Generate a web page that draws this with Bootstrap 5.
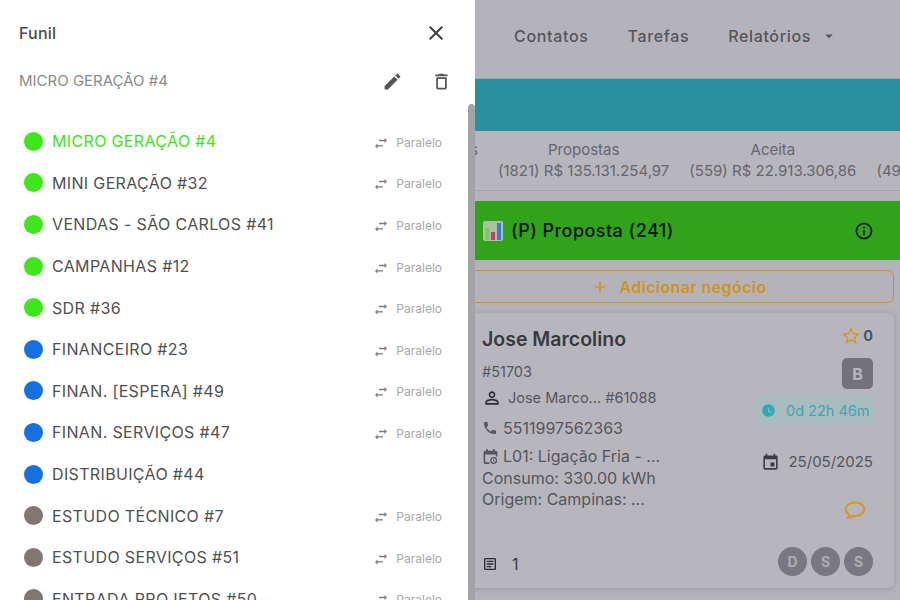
<!DOCTYPE html>
<html lang="pt-BR">
<head>
<meta charset="utf-8">
<title>Funil</title>
<link href="https://cdn.jsdelivr.net/npm/bootstrap@5.3.0/dist/css/bootstrap.min.css" rel="stylesheet">
<style>
html,body{height:600px;overflow:hidden}
body{background:#b4b3b9;font-family:Inter,"Liberation Sans",sans-serif;color:#4c4c52}
svg{fill:currentColor;display:block;flex:none}
.topbar{height:79px;border-bottom:1px solid #a6a5ab;padding:0 62px 7px 0;gap:39px;font-size:16px;font-weight:500;color:#55555b;letter-spacing:.65px}
.tealband{height:52px;background:#29909e}
.statrow{height:60px;border-bottom:1px solid #a6a5ab;background:#b7b6bc;margin-bottom:10px;padding:8px 0 0 259px;gap:20px;font-size:15px;color:#66656d;line-height:21px;white-space:nowrap}
.statcell{flex:none;text-align:center}
.statcell-a{width:219px;text-align:right}
.colwrap{margin-left:440px;margin-right:6px}
.stagehead{height:59px;background:#30a31a;margin-right:-6px;padding:0 26px 0 43px;color:#07130a;font-size:18px;font-weight:500;letter-spacing:.45px}
.addbtn{height:33px;margin:10px 0 10px 0;border:1px solid #d19318;border-radius:6px;color:#d19318;font-weight:600;font-size:16px;line-height:1;background:transparent;padding:0 0 0 24px;letter-spacing:.4px}
.dealcard{height:275px;background:#b7b6bc;border-radius:6px;box-shadow:0 1px 5px rgba(70,70,80,.25);padding:12px 21px 12px 42px;color:#55555c;font-size:14.5px}
.dealname{font-size:19.5px;font-weight:600;color:#39393f;line-height:28px}
.dealnum{margin-top:9px;line-height:20px;color:#55555c}
.personrow{margin-top:6px;line-height:20px}
.phonerow{margin-top:10px;font-size:16px;line-height:20px}
.notesblock{margin-top:8px;font-size:16px;line-height:21.6px}
.amber{color:#d19a2e}
.starcount{font-weight:700;color:#4b5563;font-size:14.5px;line-height:18px}
.starrow{gap:1px;margin-left:-3px}
.letterbox{width:31px;height:31px;border-radius:5px;background:#737278;color:#b7b6bc;font-weight:700;font-size:16px;margin-top:11px}
.timerbox{height:29px;width:118px;margin-top:7px;background:#a9bcbf;color:#41a5b0;font-size:14.5px;padding-left:6px;gap:10px;border-radius:2px}
.daterow{margin-top:26px;font-size:15px;gap:8px;color:#55555c}
.chatbox{margin-top:26px;margin-right:6px}
.avatarbubble{width:29px;height:29px;border-radius:50%;background:#79787e;color:#aeadb3;font-weight:700;font-size:14px}
.footrow{margin-top:auto}
.footcount{gap:14px;font-size:16px;color:#3c3c43;margin-top:6px}
.funildrawer{position:fixed;top:0;left:0;bottom:0;width:475px;background:#fff;color:#4d4d4d;overflow:hidden}
.drawerbody{width:468px;flex:none;padding:0 0 0 19px}
.drawertitle{height:66px;padding-right:20px;font-size:16px;font-weight:500;color:#4a4a4a;letter-spacing:.2px}
.drawersub{height:30px;padding-right:16px;font-size:15px;color:#8a8a8a;margin-bottom:24.5px}
.thumbbar{width:7px;margin-top:104px;background:#a4a4a7;border-radius:4px 4px 0 0}
.funilrow{height:41.6px;font-size:16px;letter-spacing:.35px;color:#505050;padding:0 26px 0 5px}
.funilrow.active .funilname{color:#3fe31b}
.statusdot{width:19px;height:19px;border-radius:50%;margin-right:9px;flex:none}
.dot-green{background:#3ee61b}.dot-blue{background:#1570e0}.dot-grey{background:#827675}
.modetag{font-size:12px;letter-spacing:0;color:#a8a8a8;gap:8px;margin-top:3px}
.modetag svg{color:#7d7d7d}
.iconbtn{color:#555}
.closeicon{color:#3f3f3f}
</style>
</head>
<body>
<nav class="topbar d-flex align-items-center justify-content-end">
  <span>Contatos</span><span>Tarefas</span>
  <span class="d-flex align-items-center" style="gap:9px">Relatórios <svg width="18" height="18" viewBox="0 0 24 24"><path d="M7 10l5 5 5-5z"/></svg></span>
</nav>
<div class="tealband"></div>
<div class="statrow d-flex">
  <div class="statcell statcell-a">s</div>
  <div class="statcell">Propostas<br>(1821) R$ 135.131.254,97</div>
  <div class="statcell">Aceita<br>(559) R$ 22.913.306,86</div>
  <div class="statcell">&nbsp;<br>(49</div>
</div>
<div class="colwrap">
  <div class="stagehead d-flex align-items-center justify-content-between">
    <span class="d-flex align-items-center" style="gap:8px">
      <svg width="20" height="20" viewBox="0 0 20 20"><rect width="20" height="20" rx="2" fill="#a9c2a0"/><rect x="2.500" y="7" width="4" height="12" fill="#7fc46a"/><rect x="8" y="11" width="4" height="8" fill="#d82f78"/><rect x="14" y="2" width="4" height="17" fill="#2f7fd0"/></svg>
      (P) Proposta (241)
    </span>
    <svg width="20" height="20" viewBox="0 0 24 24"><path d="M11 7h2v2h-2zm0 4h2v6h-2zm1-9C6.48 2 2 6.48 2 12s4.48 10 10 10 10-4.48 10-10S17.52 2 12 2zm0 18c-4.41 0-8-3.59-8-8s3.59-8 8-8 8 3.59 8 8-3.59 8-8 8z"/></svg>
  </div>
  <button type="button" class="addbtn btn w-100 d-flex align-items-center justify-content-center">
    <svg width="18" height="18" viewBox="0 0 24 24" style="margin-right:10px"><path d="M19 13h-6v6h-2v-6H5v-2h6V5h2v6h6v2z"/></svg>Adicionar negócio
  </button>
  <div class="dealcard d-flex flex-column">
    <div class="d-flex justify-content-between flex-grow-1">
      <div>
        <div class="dealname">Jose Marcolino</div>
        <div class="dealnum">#51703</div>
        <div class="personrow d-flex align-items-center" style="gap:6px">
          <svg width="20" height="20" viewBox="0 0 24 24" style="color:#2c2c33"><path d="M12 5.900c1.160 0 2.100.94 2.100 2.100s-.94 2.100-2.100 2.100S9.900 9.160 9.900 8s.94-2.100 2.100-2.100m0 9c2.970 0 6.100 1.460 6.100 2.100v1.100H5.900V17c0-.64 3.130-2.100 6.100-2.100M12 4C9.790 4 8 5.790 8 8s1.790 4 4 4 4-1.790 4-4-1.790-4-4-4zm0 9c-2.670 0-8 1.340-8 4v3h16v-3c0-2.660-5.330-4-8-4z"/></svg>
          Jose Marco... #61088
        </div>
        <div class="phonerow d-flex align-items-center" style="gap:5px">
          <svg width="16" height="16" viewBox="0 0 24 24"><path d="M6.620 10.790c1.440 2.830 3.760 5.140 6.590 6.590l2.200-2.200c.27-.27.67-.36 1.020-.24 1.120.37 2.330.57 3.570.57.55 0 1 .45 1 1V20c0 .55-.45 1-1 1-9.390 0-17-7.610-17-17 0-.55.45-1 1-1h3.500c.55 0 1 .45 1 1 0 1.250.2 2.450.57 3.570.11.35.03.74-.25 1.020l-2.200 2.200z"/></svg>
          5511997562363
        </div>
        <div class="notesblock">
          <div class="d-flex align-items-center" style="gap:4px">
            <svg width="17" height="17" viewBox="0 0 16 16"><path d="M4 1h1.500v1.500h5V1H12v1.500h1a1.500 1.500 0 0 1 1.500 1.500v4H13V6H3v7.500h4V15H3a1.500 1.500 0 0 1-1.500-1.500V4A1.500 1.500 0 0 1 3 2.500h1z"/><path d="M11 8.500a3.250 3.250 0 1 0 0 6.500 3.250 3.250 0 0 0 0-6.500zm0 1.200a2.050 2.050 0 1 1 0 4.100 2.050 2.050 0 0 1 0-4.100zM10.500 10.500h.8v1.300l1 .6-.4.6-1.400-.8z"/></svg>
            L01: Ligação Fria - ...
          </div>
          <div>Consumo: 330.00 kWh</div>
          <div>Origem: Campinas: ...</div>
        </div>
      </div>
      <div class="d-flex flex-column align-items-end">
        <div class="starrow d-flex align-items-center">
          <svg class="amber" width="22" height="22" viewBox="0 0 24 24"><path d="M22 9.240l-7.190-.62L12 2 9.190 8.630 2 9.240l5.460 4.730L5.820 21 12 17.270 18.180 21l-1.630-7.030L22 9.240zM12 15.400l-3.760 2.270 1-4.280-3.320-2.880 4.380-.38L12 6.100l1.710 4.040 4.380.38-3.320 2.880 1 4.280L12 15.400z"/></svg>
          <span class="starcount">0</span>
        </div>
        <div class="letterbox d-flex align-items-center justify-content-center">B</div>
        <div class="timerbox d-flex align-items-center">
          <svg width="15" height="15" viewBox="0 0 24 24" style="color:#2ea9b6"><path d="M11.990 2C6.470 2 2 6.480 2 12s4.470 10 9.990 10C17.520 22 22 17.520 22 12S17.520 2 11.990 2zM16.200 16.200L11 13V7h1.500v5.200l4.500 2.700-.8 1.300z"/></svg>
          0d 22h 46m
        </div>
        <div class="daterow d-flex align-items-center">
          <svg width="19" height="19" viewBox="0 0 24 24" style="color:#3c3c43"><path d="M17 12h-5v5h5v-5zM16 1v2H8V1H6v2H5c-1.110 0-1.990.9-1.990 2L3 19c0 1.100.89 2 2 2h14c1.100 0 2-.9 2-2V5c0-1.100-.9-2-2-2h-1V1h-2zm3 18H5V8h14v11z"/></svg>
          25/05/2025
        </div>
        <div class="chatbox amber">
          <svg width="24" height="22" viewBox="0 0 24 22"><path d="M12 2.500C6.600 2.500 2.800 5.400 2.800 9.300c0 2.300 1.300 4.200 3.500 5.400-.2 1.200-.9 2.300-1.900 3.300 2.100-.2 3.800-1 5-2.100.8.1 1.700.2 2.600.2 5.400 0 9.200-2.800 9.200-6.800S17.400 2.500 12 2.500z" fill="none" stroke="currentColor" stroke-width="2.200" stroke-linejoin="round"/></svg>
        </div>
      </div>
    </div>
    <div class="footrow d-flex justify-content-between align-items-center">
      <div class="footcount d-flex align-items-center">
        <svg width="16" height="16" viewBox="0 0 24 24" style="color:#2c2c33"><path d="M19 5v14H5V5h14m0-2H5c-1.100 0-2 .9-2 2v14c0 1.100.9 2 2 2h14c1.100 0 2-.9 2-2V5c0-1.100-.9-2-2-2zM14 17H7v-2h7v2zm3-4H7v-2h10v2zm0-4H7V7h10v2z"/></svg>
        1
      </div>
      <div class="d-flex" style="gap:4px">
        <div class="avatarbubble d-flex align-items-center justify-content-center">D</div>
        <div class="avatarbubble d-flex align-items-center justify-content-center">S</div>
        <div class="avatarbubble d-flex align-items-center justify-content-center">S</div>
      </div>
    </div>
  </div>
</div>

<aside class="funildrawer d-flex">
  <div class="drawerbody">
    <div class="drawertitle d-flex align-items-center justify-content-between">
      <span>Funil</span>
      <svg class="closeicon" width="24" height="24" viewBox="0 0 24 24"><path d="M19 6.410L17.590 5 12 10.590 6.410 5 5 6.410 10.590 12 5 17.590 6.410 19 12 13.410 17.590 19 19 17.590 13.410 12z"/></svg>
    </div>
    <div class="drawersub d-flex align-items-center justify-content-between">
      <span>MICRO GERAÇÃO #4</span>
      <span class="d-flex iconbtn" style="gap:28px">
        <svg width="21" height="21" viewBox="0 0 24 24"><path d="M3 17.250V21h3.750L17.810 9.940l-3.750-3.750L3 17.250zM20.710 7.040c.39-.39.39-1.020 0-1.410l-2.340-2.340c-.39-.39-1.020-.39-1.410 0l-1.830 1.830 3.750 3.750 1.830-1.830z"/></svg>
        <svg width="21" height="21" viewBox="0 0 24 24"><path d="M6 19c0 1.100.9 2 2 2h8c1.100 0 2-.9 2-2V7H6v12zM8 9h8v10H8V9zm7.500-5l-1-1h-5l-1 1H5v2h14V4z"/></svg>
      </span>
    </div>
    <div id="funil-list">
      <div class="funilrow active d-flex align-items-center"><span class="statusdot dot-green"></span><span class="funilname flex-grow-1">MICRO GERAÇÃO #4</span><span class="modetag d-flex align-items-center"><svg width="14" height="14" viewBox="0 0 14 14"><path d="M5 3.800h5.500V2L13 4.500 10.500 7V5.200H5zM9 9.200H3.500V7.500L1 10l2.500 2.500v-1.900H9z"/></svg>Paralelo</span></div>
      <div class="funilrow d-flex align-items-center"><span class="statusdot dot-green"></span><span class="funilname flex-grow-1">MINI GERAÇÃO #32</span><span class="modetag d-flex align-items-center"><svg width="14" height="14" viewBox="0 0 14 14"><path d="M5 3.800h5.500V2L13 4.500 10.500 7V5.200H5zM9 9.200H3.500V7.500L1 10l2.500 2.500v-1.900H9z"/></svg>Paralelo</span></div>
      <div class="funilrow d-flex align-items-center"><span class="statusdot dot-green"></span><span class="funilname flex-grow-1">VENDAS - SÃO CARLOS #41</span><span class="modetag d-flex align-items-center"><svg width="14" height="14" viewBox="0 0 14 14"><path d="M5 3.800h5.500V2L13 4.500 10.500 7V5.200H5zM9 9.200H3.500V7.500L1 10l2.500 2.500v-1.900H9z"/></svg>Paralelo</span></div>
      <div class="funilrow d-flex align-items-center"><span class="statusdot dot-green"></span><span class="funilname flex-grow-1">CAMPANHAS #12</span><span class="modetag d-flex align-items-center"><svg width="14" height="14" viewBox="0 0 14 14"><path d="M5 3.800h5.500V2L13 4.500 10.500 7V5.200H5zM9 9.200H3.500V7.500L1 10l2.500 2.500v-1.900H9z"/></svg>Paralelo</span></div>
      <div class="funilrow d-flex align-items-center"><span class="statusdot dot-green"></span><span class="funilname flex-grow-1">SDR #36</span><span class="modetag d-flex align-items-center"><svg width="14" height="14" viewBox="0 0 14 14"><path d="M5 3.800h5.500V2L13 4.500 10.500 7V5.200H5zM9 9.200H3.500V7.500L1 10l2.500 2.500v-1.900H9z"/></svg>Paralelo</span></div>
      <div class="funilrow d-flex align-items-center"><span class="statusdot dot-blue"></span><span class="funilname flex-grow-1">FINANCEIRO #23</span><span class="modetag d-flex align-items-center"><svg width="14" height="14" viewBox="0 0 14 14"><path d="M5 3.800h5.500V2L13 4.500 10.500 7V5.200H5zM9 9.200H3.500V7.500L1 10l2.500 2.500v-1.900H9z"/></svg>Paralelo</span></div>
      <div class="funilrow d-flex align-items-center"><span class="statusdot dot-blue"></span><span class="funilname flex-grow-1">FINAN. [ESPERA] #49</span><span class="modetag d-flex align-items-center"><svg width="14" height="14" viewBox="0 0 14 14"><path d="M5 3.800h5.500V2L13 4.500 10.500 7V5.200H5zM9 9.200H3.500V7.500L1 10l2.500 2.500v-1.900H9z"/></svg>Paralelo</span></div>
      <div class="funilrow d-flex align-items-center"><span class="statusdot dot-blue"></span><span class="funilname flex-grow-1">FINAN. SERVIÇOS #47</span><span class="modetag d-flex align-items-center"><svg width="14" height="14" viewBox="0 0 14 14"><path d="M5 3.800h5.500V2L13 4.500 10.500 7V5.200H5zM9 9.200H3.500V7.500L1 10l2.500 2.500v-1.900H9z"/></svg>Paralelo</span></div>
      <div class="funilrow d-flex align-items-center"><span class="statusdot dot-blue"></span><span class="funilname flex-grow-1">DISTRIBUIÇÃO #44</span></div>
      <div class="funilrow d-flex align-items-center"><span class="statusdot dot-grey"></span><span class="funilname flex-grow-1">ESTUDO TÉCNICO #7</span><span class="modetag d-flex align-items-center"><svg width="14" height="14" viewBox="0 0 14 14"><path d="M5 3.800h5.500V2L13 4.500 10.500 7V5.200H5zM9 9.200H3.500V7.500L1 10l2.500 2.500v-1.900H9z"/></svg>Paralelo</span></div>
      <div class="funilrow d-flex align-items-center"><span class="statusdot dot-grey"></span><span class="funilname flex-grow-1">ESTUDO SERVIÇOS #51</span><span class="modetag d-flex align-items-center"><svg width="14" height="14" viewBox="0 0 14 14"><path d="M5 3.800h5.500V2L13 4.500 10.500 7V5.200H5zM9 9.200H3.500V7.500L1 10l2.500 2.500v-1.900H9z"/></svg>Paralelo</span></div>
      <div class="funilrow d-flex align-items-center"><span class="statusdot dot-grey"></span><span class="funilname flex-grow-1">ENTRADA PROJETOS #50</span><span class="modetag d-flex align-items-center"><svg width="14" height="14" viewBox="0 0 14 14"><path d="M5 3.800h5.500V2L13 4.500 10.500 7V5.200H5zM9 9.200H3.500V7.500L1 10l2.500 2.500v-1.900H9z"/></svg>Paralelo</span></div>
    </div>
  </div>
  <div class="thumbbar"></div>
</aside>
<script src="https://cdn.jsdelivr.net/npm/bootstrap@5.3.0/dist/js/bootstrap.bundle.min.js"></script>
</body>
</html>
